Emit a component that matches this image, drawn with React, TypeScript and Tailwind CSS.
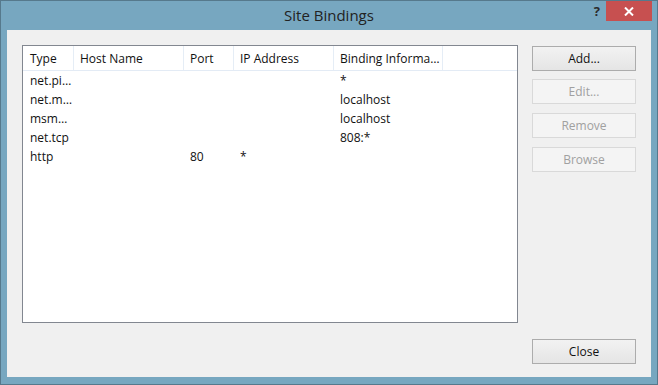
import React from 'react';

type Row = { type: string; host: string; port: string; ip: string; binding: string };

const rows: Row[] = [
  { type: 'net.pi…', host: '', port: '', ip: '', binding: '*' },
  { type: 'net.m…', host: '', port: '', ip: '', binding: 'localhost' },
  { type: 'msm…', host: '', port: '', ip: '', binding: 'localhost' },
  { type: 'net.tcp', host: '', port: '', ip: '', binding: '808:*' },
  { type: 'http', host: '', port: '80', ip: '*', binding: '' },
];

const cols = [
  { label: 'Type', w: 'w-[51px] pl-[7px]', key: 'type' as const },
  { label: 'Host Name', w: 'w-[110px] pl-[6px]', key: 'host' as const },
  { label: 'Port', w: 'w-[50px] pl-[6px]', key: 'port' as const },
  { label: 'IP Address', w: 'w-[100px] pl-[6px]', key: 'ip' as const },
  { label: 'Binding Informa…', w: 'w-[109px] pl-[6px]', key: 'binding' as const },
];

function DialogButton({ label, disabled }: { label: string; disabled?: boolean }) {
  return (
    <button
      className={`w-[104px] h-[25px] flex items-center justify-center border text-[12px] ${
        disabled
          ? 'border-[#d9d9d9] bg-[#f4f4f4] text-[#a0a0a0]'
          : 'border-[#acacac] bg-gradient-to-b from-[#f2f2f2] to-[#e5e5e5] text-[#111]'
      }`}
    >
      {label}
    </button>
  );
}

export default function App() {
  return (
    <div
      className="w-[658px] h-[385px] border border-[#56798c] bg-[#77a7c0] flex flex-col select-none"
      style={{ fontFamily: '"Open Sans", "Noto Sans", sans-serif' }}
    >
      {/* Title bar */}
      <div className="relative h-[29px] shrink-0 flex items-center justify-center">
        <span className="text-[15px] text-[#222] leading-none">Site Bindings</span>
        <span className="absolute right-[57px] top-[4px] text-[13px] font-bold text-[#2b2b2b] leading-none">?</span>
        <div className="absolute right-[5px] top-0 w-[46px] h-[20px] bg-[#c75050] flex items-center justify-center">
          <svg width="10" height="9" viewBox="0 0 10 9">
            <path d="M1 0.5 L9 8.5 M9 0.5 L1 8.5" stroke="#fff" strokeWidth="2" />
          </svg>
        </div>
      </div>

      {/* Client area */}
      <div className="mx-[6px] h-[347px] shrink-0 bg-[#f0f0f0] flex flex-col pt-[15px] px-[15px] pb-[13px]">
        <div className="flex gap-[14px]">
          {/* List view */}
          <div className="w-[496px] h-[278px] border border-[#828790] bg-white text-[12px] text-[#111]">
            <div className="flex h-[25px] border-b border-[#e3ebf5]">
              {cols.map((c) => (
                <div key={c.key} className={`${c.w} h-full pt-[1px] border-r border-[#e5edf6] flex items-center`}>
                  {c.label}
                </div>
              ))}
            </div>
            {rows.map((r, i) => (
              <div key={i} className="flex h-[19px] items-center">
                {cols.map((c) => (
                  <div key={c.key} className={`${c.w} leading-none`}>
                    {r[c.key]}
                  </div>
                ))}
              </div>
            ))}
          </div>

          {/* Action buttons */}
          <div className="flex flex-col pt-[1px]">
            <DialogButton label="Add..." />
            <div className="mt-[8px]">
              <DialogButton label="Edit..." disabled />
            </div>
            <div className="mt-[9px]">
              <DialogButton label="Remove" disabled />
            </div>
            <div className="mt-[9px]">
              <DialogButton label="Browse" disabled />
            </div>
          </div>
        </div>

        <div className="flex-1" />
        <div className="flex justify-end">
          <DialogButton label="Close" />
        </div>
      </div>
    </div>
  );
}
